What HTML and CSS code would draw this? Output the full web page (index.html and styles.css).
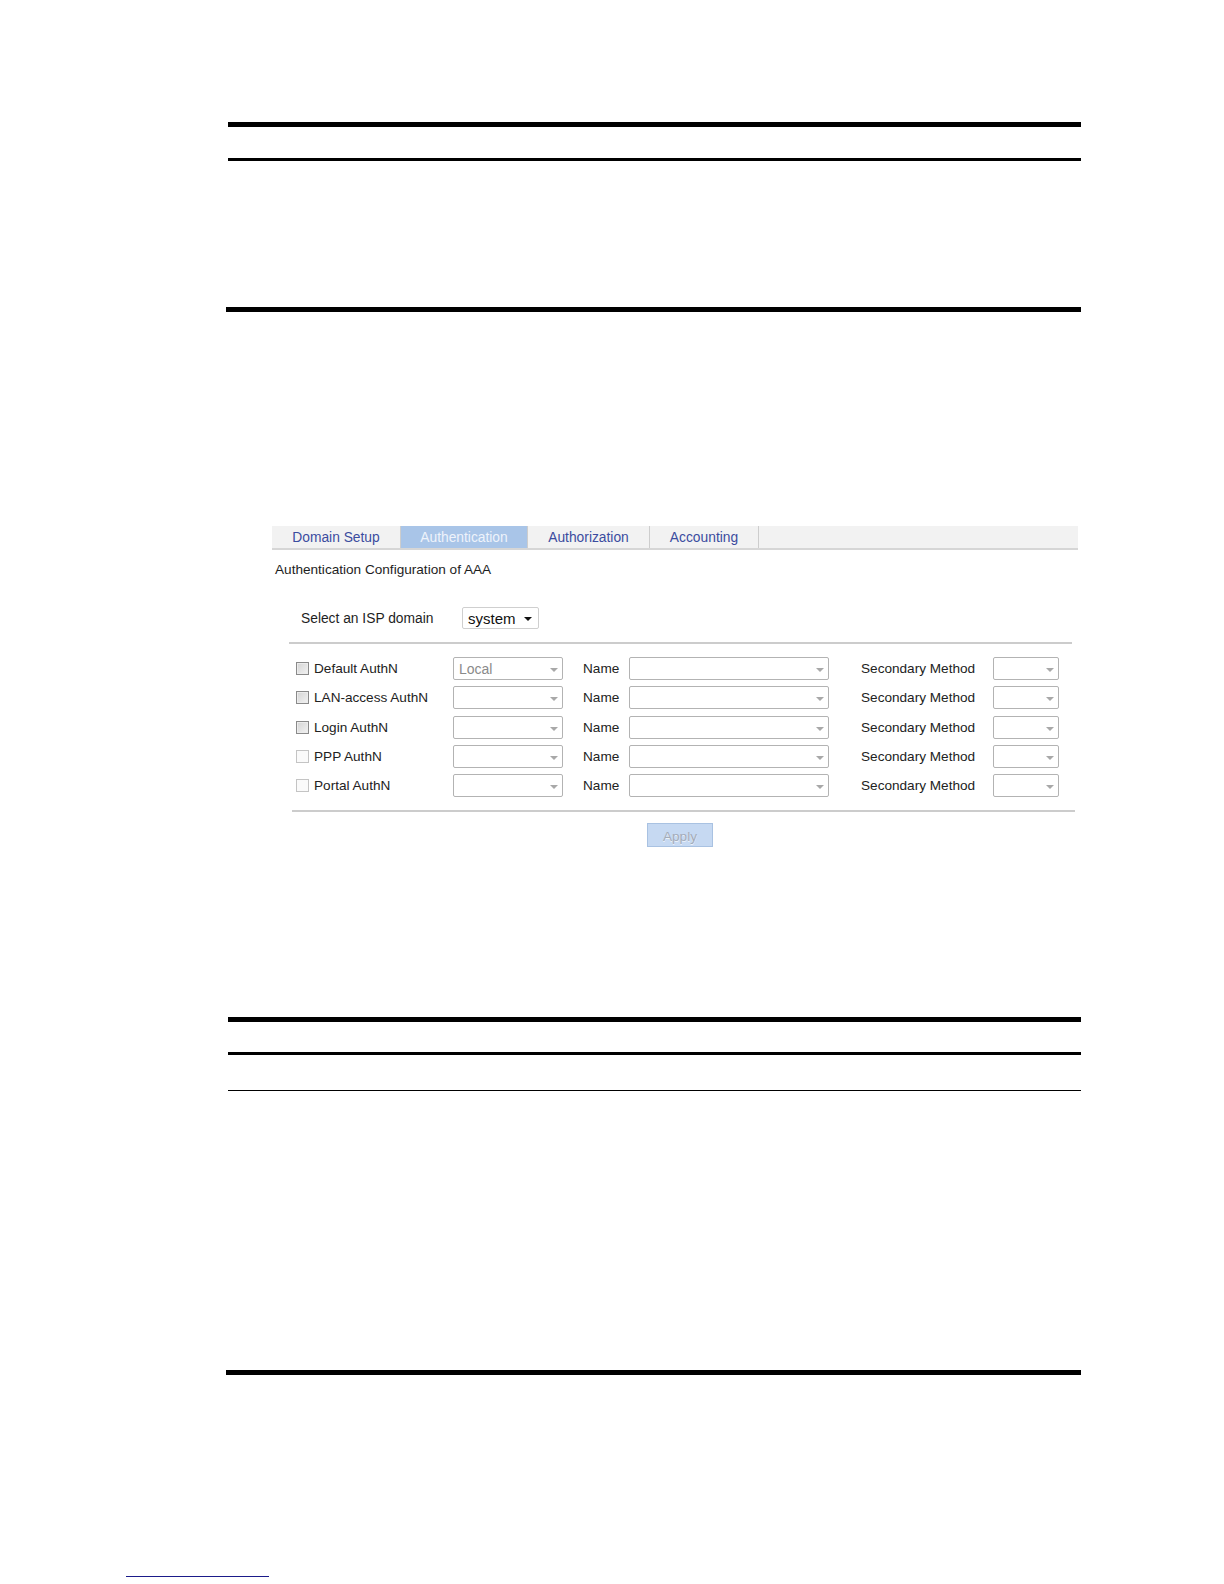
FILE: index.html
```html
<!DOCTYPE html>
<html>
<head>
<meta charset="utf-8">
<title>Authentication Configuration of AAA</title>
<link rel="stylesheet" href="styles.css">
</head>
<body>
<div class="page">
  <div class="rule rule-thick r1"></div>
  <div class="rule rule-mid r2"></div>
  <div class="rule rule-thick r3"></div>

  <div class="figure">
    <div class="tabs">
      <div class="tab t1">Domain Setup</div>
      <div class="tab t2 active">Authentication</div>
      <div class="tab t3">Authorization</div>
      <div class="tab t4">Accounting</div>
    </div>
    <div class="title">Authentication Configuration of AAA</div>
    <div class="isp-row">
      <span class="isp-label">Select an ISP domain</span>
      <div class="isp-select"><span>system</span><i class="dark-arrow"></i></div>
    </div>
    <div class="hr hr1"></div>
    <div class="rows">
      <div class="row">
        <div class="cb dark"></div><span class="lbl">Default AuthN</span>
        <div class="sel s1"><span class="val">Local</span><i class="arrow"></i></div>
        <span class="lbl">Name</span>
        <div class="sel s2"><i class="arrow"></i></div>
        <span class="lbl">Secondary Method</span>
        <div class="sel s3"><i class="arrow"></i></div>
      </div>
      <div class="row">
        <div class="cb dark"></div><span class="lbl">LAN-access AuthN</span>
        <div class="sel s1"><i class="arrow"></i></div>
        <span class="lbl">Name</span>
        <div class="sel s2"><i class="arrow"></i></div>
        <span class="lbl">Secondary Method</span>
        <div class="sel s3"><i class="arrow"></i></div>
      </div>
      <div class="row">
        <div class="cb dark"></div><span class="lbl">Login AuthN</span>
        <div class="sel s1"><i class="arrow"></i></div>
        <span class="lbl">Name</span>
        <div class="sel s2"><i class="arrow"></i></div>
        <span class="lbl">Secondary Method</span>
        <div class="sel s3"><i class="arrow"></i></div>
      </div>
      <div class="row">
        <div class="cb light"></div><span class="lbl">PPP AuthN</span>
        <div class="sel s1"><i class="arrow"></i></div>
        <span class="lbl">Name</span>
        <div class="sel s2"><i class="arrow"></i></div>
        <span class="lbl">Secondary Method</span>
        <div class="sel s3"><i class="arrow"></i></div>
      </div>
      <div class="row">
        <div class="cb light"></div><span class="lbl">Portal AuthN</span>
        <div class="sel s1"><i class="arrow"></i></div>
        <span class="lbl">Name</span>
        <div class="sel s2"><i class="arrow"></i></div>
        <span class="lbl">Secondary Method</span>
        <div class="sel s3"><i class="arrow"></i></div>
      </div>
    </div>
    <div class="hr hr2"></div>
    <div class="btn-row"><div class="apply">Apply</div></div>
  </div>

  <div class="rule rule-thick r4"></div>
  <div class="rule rule-mid r5"></div>
  <div class="rule rule-thin r6"></div>
  <div class="rule rule-thick r7"></div>
  <div class="footer-line"></div>
</div>
</body>
</html>
```

FILE: styles.css
```css
html, body {
  margin: 0;
  padding: 0;
  background: #ffffff;
}

.page {
  width: 1224px;
  height: 1584px;
  overflow: hidden;
  font-family: "Liberation Sans", Arial, sans-serif;
  font-size: 13.6px;
  color: #222222;
}

.rule {
  background: #000000;
  margin-left: 228px;
  width: 853px;
}
.rule-thick { height: 5px; }
.rule-mid { height: 3px; }
.rule-thin { height: 1px; }

.r1 { margin-top: 122px; }
.r2 { margin-top: 31px; }
.r3 { margin-top: 146px; margin-left: 226px; width: 855px; }

.figure {
  margin-top: 214px;
  margin-left: 272px;
  width: 806px;
}

.tabs {
  display: flex;
  height: 22px;
  background: #f2f2f2;
  border-bottom: 2px solid #d6d6d6;
}
.tab {
  display: flex;
  align-items: center;
  justify-content: center;
  color: #3b4c9f;
  font-size: 13.8px;
  border-right: 1px solid #cdcdcd;
  box-sizing: border-box;
}
.t1 { width: 129px; }
.t2 { width: 127px; }
.t3 { width: 122px; }
.t4 { width: 109px; }
.tab.active {
  background: #a9c5e8;
  color: #eef3fb;
}

.title {
  margin-top: 12px;
  padding-left: 3px;
  line-height: 16px;
  color: #1e1e1e;
}

.isp-row {
  display: flex;
  align-items: center;
  margin-top: 29px;
  height: 22px;
  padding-left: 29px;
}
.isp-label {
  width: 161px;
  color: #1e1e1e;
  font-size: 13.8px;
}
.isp-select {
  width: 77px;
  height: 22px;
  box-sizing: border-box;
  border: 1px solid #cfcfcf;
  border-radius: 2px;
  display: flex;
  align-items: center;
  padding-left: 5px;
  font-size: 15px;
  color: #111111;
  position: relative;
}
.dark-arrow {
  position: absolute;
  right: 6px;
  top: 9px;
  width: 0;
  height: 0;
  border-left: 4px solid transparent;
  border-right: 4px solid transparent;
  border-top: 4px solid #111111;
}

.hr {
  height: 2px;
  background: #cccccc;
}
.hr1 {
  margin-top: 13px;
  margin-left: 17px;
  width: 783px;
}

.rows {
  margin-top: 13px;
  padding-left: 24px;
}
.row {
  display: grid;
  grid-template-columns: 18px 139px 130px 46px 232px 132px 66px;
  align-items: center;
  height: 29.3px;
}
.row:first-child { margin-top: -3px; }

.cb {
  width: 13px;
  height: 13px;
  box-sizing: border-box;
}
.cb.dark {
  border: 1px solid #8a8a8a;
  background: linear-gradient(135deg, #d4d4d4, #f2f2f2);
  box-shadow: inset 0 0 0 1px #ececec;
}
.cb.light {
  border: 1px solid #c4c4c4;
  background: #fafafa;
}

.lbl {
  color: #222222;
  white-space: nowrap;
}

.sel {
  height: 23px;
  box-sizing: border-box;
  border: 1px solid #b3b3b3;
  border-radius: 2px;
  background: #ffffff;
  position: relative;
  display: flex;
  align-items: center;
  padding-left: 5px;
}
.s1 { width: 110px; }
.s2 { width: 200px; }
.s3 { width: 66px; }
.val {
  color: #8a8a8a;
  font-size: 14px;
}
.arrow {
  position: absolute;
  right: 4px;
  top: 10px;
  width: 0;
  height: 0;
  border-left: 4px solid transparent;
  border-right: 4px solid transparent;
  border-top: 4px solid #a8a8a8;
}

.hr2 {
  margin-top: 10px;
  margin-left: 20px;
  width: 783px;
}

.btn-row {
  margin-top: 11px;
  padding-left: 375px;
}
.apply {
  width: 66px;
  height: 24px;
  box-sizing: border-box;
  border: 1px solid #a9c2e2;
  background: #c6d9f2;
  color: #a3abb8;
  text-shadow: 0 1px 0 #eef3fa;
  display: flex;
  align-items: center;
  justify-content: center;
  padding-top: 3px;
}

.r4 { margin-top: 170px; }
.r5 { margin-top: 30px; }
.r6 { margin-top: 35px; }
.r7 { margin-top: 279px; margin-left: 226px; width: 855px; }

.footer-line {
  margin-top: 201px;
  margin-left: 126px;
  width: 143px;
  height: 1px;
  background: #1b1b8a;
}
```
